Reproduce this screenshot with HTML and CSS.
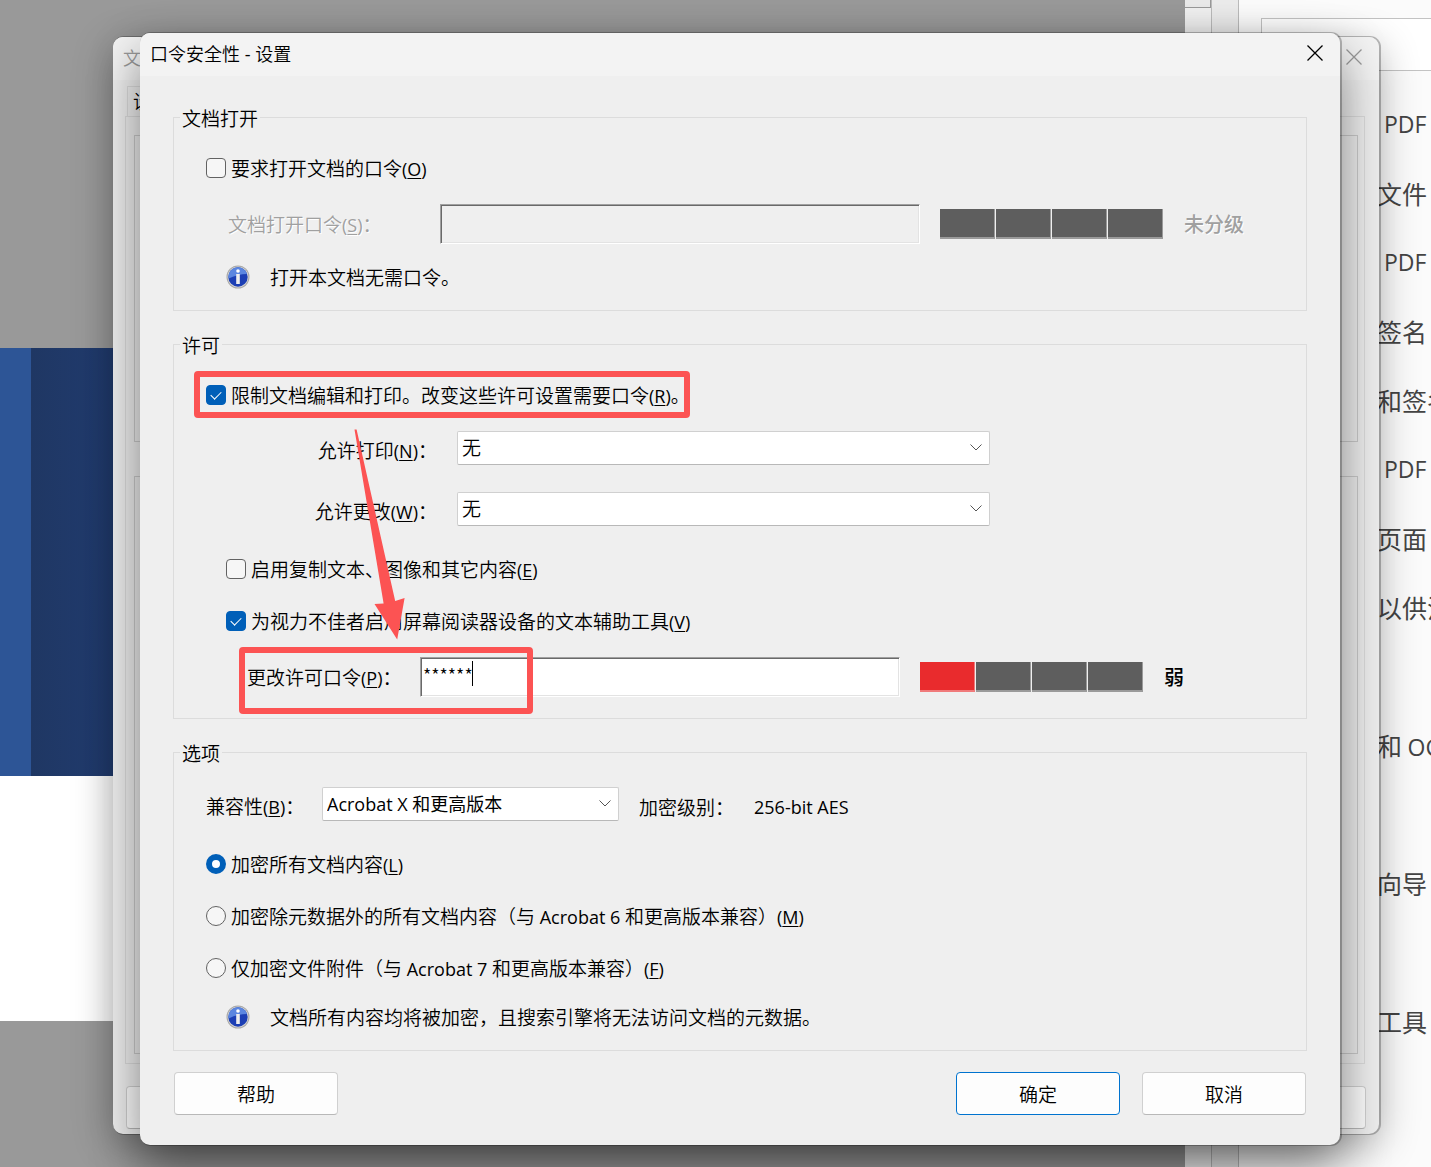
FILE: index.html
```html
<!DOCTYPE html>
<html lang="zh-CN">
  <head>
    <meta charset="utf-8">
    <title>口令安全性 - 设置</title>
    <link rel="stylesheet" href="styles.css">
  </head>
  <body>
    <div class="app">
      <div class="viewer">
        <div class="page">
          <div class="page-cover"></div>
        </div>
      </div>
      <div class="scrollbar"><div class="scroll-thumb"></div></div>
      <div class="splitter"></div>
      <div class="side-panel">
        <div class="side-box"></div>
        <ul class="side-list">
          <li class="indent">PDF</li>
          <li>文件</li>
          <li class="indent">PDF</li>
          <li>签名</li>
          <li>和签名</li>
          <li class="indent">PDF</li>
          <li>页面</li>
          <li>以供注释</li>
          <li></li>
          <li>和 <span class="en">OCR</span></li>
          <li></li>
          <li>向导</li>
          <li></li>
          <li>工具</li>
        </ul>
      </div>
    </div>

    <!-- Document properties window, behind the dialog -->
    <div class="window properties">
      <div class="title-bar">
        <span class="title">文</span>
        <button class="close" type="button" aria-label="关闭">
          <svg width="16" height="16" viewBox="0 0 16 16"><path d="M.5.5l15 15M15.5.5l-15 15"/></svg>
        </button>
      </div>
      <div class="properties-body">
        <div class="tab">设</div>
        <div class="tab-panel">
          <div class="tab-group small"></div>
          <div class="tab-group large"></div>
        </div>
        <div class="properties-footer">
          <button class="btn" type="button" aria-label="帮助"></button>
          <button class="btn" type="button" aria-label="取消"></button>
        </div>
      </div>
    </div>

    <!-- Password security dialog -->
    <form class="window dialog" role="dialog" aria-labelledby="dialog-title">
      <div class="title-bar">
        <span class="title" id="dialog-title">口令安全性<span class="en"> - </span>设置</span>
        <button class="close" type="button" aria-label="关闭">
          <svg width="16" height="16" viewBox="0 0 16 16"><path d="M.5.5l15 15M15.5.5l-15 15"/></svg>
        </button>
      </div>

      <div class="dialog-body">
        <fieldset class="group">
          <legend>文档打开</legend>
          <div class="row">
            <input type="checkbox" id="require-open">
            <label for="require-open">要求打开文档的口令<span class="en">(<u>O</u>)</span></label>
          </div>
          <div class="row field-row open-row">
            <label class="disabled" for="open-password">文档打开口令<span class="en">(<u>S</u>)</span>：</label>
            <div class="field"><input type="text" id="open-password" disabled></div>
            <div class="strength"><i></i><i></i><i></i><i></i></div>
            <span class="rating disabled">未分级</span>
          </div>
          <div class="row info-row">
            <svg class="info" width="24" height="24" viewBox="0 0 24 24">
              <circle cx="12" cy="12" r="11.5" fill="#a9a9a9"/>
              <circle cx="12" cy="12" r="10.5" fill="#d6d6d6"/>
              <circle cx="12" cy="12" r="9.7" fill="#1c3fb4"/>
              <path d="M2.6 13.5a9.5 9.5 0 0 1 18.4-4.6C15 9 8 10.5 2.6 13.500z" fill="#5b86e0"/>
              <circle cx="12" cy="6" r="1.8" fill="#fff"/>
              <path d="M10.200 9h3.600v10h-3.600z" fill="#eee"/>
            </svg>
            <span>打开本文档无需口令。</span>
          </div>
        </fieldset>

        <fieldset class="group permissions">
          <legend>许可</legend>
          <div class="row">
            <input type="checkbox" id="restrict" checked>
            <label for="restrict">限制文档编辑和打印。改变这些许可设置需要口令<span class="en">(<u>R</u>)</span>。</label>
          </div>
          <div class="row combo-row">
            <label for="allow-print">允许打印<span class="en">(<u>N</u>)</span>：</label>
            <div class="combo">
              <select id="allow-print"><option>无</option></select>
              <svg width="12" height="7" viewBox="0 0 12 7"><path d="M.5.5L6 6 11.500.5"/></svg>
            </div>
          </div>
          <div class="row combo-row">
            <label for="allow-change">允许更改<span class="en">(<u>W</u>)</span>：</label>
            <div class="combo">
              <select id="allow-change"><option>无</option></select>
              <svg width="12" height="7" viewBox="0 0 12 7"><path d="M.5.5L6 6 11.500.5"/></svg>
            </div>
          </div>
          <div class="row nested after-combo">
            <input type="checkbox" id="allow-copy">
            <label for="allow-copy">启用复制文本、图像和其它内容<span class="en">(<u>E</u>)</span></label>
          </div>
          <div class="row nested">
            <input type="checkbox" id="allow-reader" checked>
            <label for="allow-reader">为视力不佳者启用屏幕阅读器设备的文本辅助工具<span class="en">(<u>V</u>)</span></label>
          </div>
          <div class="row field-row change-row">
            <label for="change-password">更改许可口令<span class="en">(<u>P</u>)</span>：</label>
            <div class="field">
              <input type="text" id="change-password" value="******">
              <span class="caret"></span>
            </div>
            <div class="strength"><i class="weak"></i><i></i><i></i><i></i></div>
            <span class="rating">弱</span>
          </div>
        </fieldset>

        <fieldset class="group">
          <legend>选项</legend>
          <div class="row compat-row">
            <label for="compat">兼容性<span class="en">(<u>B</u>)</span>：</label>
            <div class="combo">
              <select id="compat"><option>Acrobat X 和更高版本</option></select>
              <svg width="12" height="7" viewBox="0 0 12 7"><path d="M.5.5L6 6 11.500.5"/></svg>
            </div>
            <span class="level">加密级别：</span>
            <span class="en">256-bit AES</span>
          </div>
          <div class="row after-combo">
            <input type="radio" name="scope" id="scope-all" checked>
            <label for="scope-all">加密所有文档内容<span class="en">(<u>L</u>)</span></label>
          </div>
          <div class="row">
            <input type="radio" name="scope" id="scope-meta">
            <label for="scope-meta">加密除元数据外的所有文档内容（与<span class="en"> Acrobat 6 </span>和更高版本兼容）<span class="en">(<u>M</u>)</span></label>
          </div>
          <div class="row">
            <input type="radio" name="scope" id="scope-files">
            <label for="scope-files">仅加密文件附件（与<span class="en"> Acrobat 7 </span>和更高版本兼容）<span class="en">(<u>F</u>)</span></label>
          </div>
          <div class="row info-row">
            <svg class="info" width="24" height="24" viewBox="0 0 24 24">
              <circle cx="12" cy="12" r="11.5" fill="#a9a9a9"/>
              <circle cx="12" cy="12" r="10.5" fill="#d6d6d6"/>
              <circle cx="12" cy="12" r="9.7" fill="#1c3fb4"/>
              <path d="M2.6 13.5a9.5 9.5 0 0 1 18.4-4.6C15 9 8 10.5 2.6 13.500z" fill="#5b86e0"/>
              <circle cx="12" cy="6" r="1.8" fill="#fff"/>
              <path d="M10.200 9h3.600v10h-3.600z" fill="#eee"/>
            </svg>
            <span>文档所有内容均将被加密，且搜索引擎将无法访问文档的元数据。</span>
          </div>
        </fieldset>

        <div class="footer">
          <button class="btn" type="button">帮助</button>
          <button class="btn primary" type="submit">确定</button>
          <button class="btn" type="button">取消</button>
        </div>
      </div>

      <!-- Red marks drawn over the dialog -->
      <svg class="marks" width="600" height="700" viewBox="0 0 600 700">
        <rect x="57" y="341" width="490" height="41" rx="1"/>
        <rect x="102" y="617" width="288" height="61" rx="1"/>
        <path d="M214.500 396.500L216.600 396.500 255.200 568 264.600 565 257.200 606.500 234.500 571 243.600 570.500z"/>
      </svg>
    </form>
  </body>
</html>
```
FILE: styles.css
```css
* {
  box-sizing: border-box;
}

body {
  color: #000;
  font-family: "Noto Sans CJK SC", sans-serif;
  font-size: 19px;
  font-weight: 350;
  height: 100vh;
  line-height: 28px;
  margin: 0;
  overflow: hidden;
  position: relative;
}

button, input, select {
  color: inherit;
  font: inherit;
  margin: 0;
}

.en {
  font-family: "Open Sans", "Noto Sans", sans-serif;
  font-size: 18px;
  font-weight: 400;
  white-space: pre;
}

u {
  text-decoration-thickness: 1px;
  text-underline-offset: 2px;
}

/* Application behind the windows */
.app {
  display: flex;
  height: 100%;
}

.viewer {
  background: #999;
  flex: 1;
  padding-top: 348px;
}

.page {
  background: #fff;
  height: 673px;
}

.page-cover {
  background: linear-gradient(90deg, #2d5596 31px, #1f3763 31px, #213c70 113px);
  height: 428px;
}

.scrollbar {
  background: #f0f0f0;
  border-right: 1px solid #bbb;
  width: 27px;
}

.scroll-thumb {
  background: #e9e9e9;
  border: 1px solid #999;
  border-width: 0 1px 1px 0;
  height: 8px;
}

.splitter {
  background: #ebebeb;
  border-right: 1px solid #bbb;
  width: 27px;
}

.side-panel {
  background: #fbfbfb;
  overflow: hidden;
  padding-top: 18px;
  width: 192px;
}

.side-box {
  background: #fff;
  border: 1px solid #c3c3c3;
  border-right: 0;
  height: 53px;
  margin-left: 22px;
}

.side-list {
  color: #444;
  font-size: 25px;
  font-weight: 400;
  line-height: 69px;
  list-style: none;
  margin: 19px 0 0;
  padding-left: 138px;
  white-space: nowrap;
}

.side-list li {
  height: 69px;
}

.side-list .indent {
  font-family: "Open Sans", sans-serif;
  font-size: 23px;
  padding-left: 7px;
}

.side-list .en {
  font-size: 23px;
}

/* Windows */
.window {
  background: #efefef;
  border-radius: 10px;
  display: flex;
  flex-direction: column;
  position: absolute;
}

.title-bar {
  align-items: center;
  background: #f3f3f3;
  border-radius: 10px 10px 0 0;
  display: flex;
  height: 43px;
  justify-content: space-between;
  padding: 0 17px 3px 10px;
}

.title {
  font-size: 18px;
}

.close {
  background: none;
  border: 0;
  display: flex;
  padding: 0;
}

.close path {
  fill: none;
  stroke: #000;
  stroke-width: 1.3;
}

.properties {
  bottom: 33px;
  box-shadow: 1px 0 0 1px rgba(0, 0, 0, 0.25), 0 10px 40px rgba(0, 0, 0, 0.3);
  left: 113px;
  right: 52px;
  top: 37px;
}

.properties .title {
  color: #999;
}

.properties .close path {
  stroke: #999;
}

.properties-body {
  display: flex;
  flex: 1;
  flex-direction: column;
  padding: 6px 14px 5px 12px;
}

.tab {
  border: 1px solid #dcdcdc;
  border-bottom: 0;
  height: 30px;
  margin-left: 2px;
  padding: 0 5px;
  width: 80px;
}

.tab-panel {
  border: 1px solid #dcdcdc;
  display: flex;
  flex: 1;
  flex-direction: column;
  gap: 34px;
  margin-bottom: 22px;
  padding: 18px 6px 9px 8px;
}

.tab-group {
  border: 1px solid #ccc;
}

.tab-group.small {
  flex: 306;
}

.tab-group.large {
  flex: 579;
}

.properties-footer {
  display: flex;
  justify-content: space-between;
  margin: 0 -1px 0 1px;
}

.dialog {
  box-shadow: 1px 0 0 1px rgba(0, 0, 0, 0.25), 0 22px 50px rgba(0, 0, 0, 0.48);
  left: 140px;
  right: 91px;
  top: 33px;
}

.dialog-body {
  display: flex;
  flex-direction: column;
  gap: 20px;
  padding: 28px 33px 30px;
}

/* Groups and rows */
.group {
  border: 1px solid #dcdcdc;
  margin: 0;
  min-width: 0;
  padding: 21px 0 17px 32px;
}

.permissions {
  padding-bottom: 21px;
}

.group legend {
  line-height: 27px;
  margin-left: -26px;
  padding: 0 2px;
}

.row {
  align-items: center;
  display: flex;
  gap: 5px;
  min-height: 32px;
  white-space: nowrap;
}

.row + .row {
  margin-top: 20px;
}

.nested {
  padding-left: 20px;
}

.row + .info-row {
  gap: 20px;
  margin-top: 17px;
  padding-left: 20px;
}

.field-row {
  gap: 20px;
}

.open-row label {
  margin-left: 22px;
  width: 192px;
}

.change-row label {
  margin-left: 41px;
  width: 153px;
}

.combo-row,
.compat-row {
  align-items: flex-end;
  gap: 20px;
}

.combo-row label {
  text-align: right;
  width: 231px;
}

.combo-row .combo {
  flex: 0 1 533px;
}

.row + .after-combo,
.combo-row + .combo-row {
  margin-top: 27px;
}

.compat-row label {
  width: 96px;
}

.compat-row .combo {
  flex: 0 1 297px;
}

.level {
  width: 95px;
}

.disabled {
  color: #a0a0a0;
  text-shadow: 1px 1px #fff;
}

/* Controls */
input[type="checkbox"],
input[type="radio"] {
  appearance: none;
  background: #f6f6f6;
  border: 1px solid #626262;
  border-radius: 4px;
  flex: none;
  height: 20px;
  position: relative;
  width: 20px;
}

input[type="radio"] {
  border-radius: 50%;
}

input[type="checkbox"]:checked {
  background: #005fb8;
  border-color: #005fb8;
}

input[type="checkbox"]:checked::after {
  border: solid #fff;
  border-width: 0 0 1px 1px;
  content: "";
  height: 5px;
  left: 4px;
  position: absolute;
  top: 5px;
  transform: rotate(-45deg);
  width: 9px;
}

input[type="radio"]:checked {
  background: #fff;
  border: 6px solid #005fb8;
}

.field {
  flex: 0 1 480px;
  position: relative;
}

.field input {
  background: #fff;
  border: 1px solid;
  border-color: #a0a0a0 #fff #fff #a0a0a0;
  border-radius: 0;
  box-shadow: inset 1px 1px #696969, inset -1px -1px #e3e3e3;
  display: block;
  font-size: 18px;
  height: 40px;
  outline: none;
  padding: 0 2px 6px;
  width: 100%;
}

.field input:disabled {
  background: #efefef;
}

.caret {
  background: #000;
  height: 25px;
  left: 52px;
  position: absolute;
  top: 4px;
  width: 1px;
}

.combo {
  position: relative;
}

.combo select {
  appearance: none;
  background: #fff;
  border: 1px solid #d0d0d0;
  border-bottom-color: #b8b8b8;
  border-radius: 2px;
  display: block;
  font-family: "Open Sans", "Noto Sans CJK SC", sans-serif;
  height: 34px;
  padding: 0 30px 0 4px;
  width: 100%;
}

#compat {
  font-size: 18px;
  font-weight: 400;
}

.combo svg {
  fill: none;
  pointer-events: none;
  position: absolute;
  right: 8px;
  stroke: #555;
  top: 13px;
}

.strength {
  display: flex;
  gap: 1px;
  padding-right: 1px;
}

.strength i {
  background: #5e5e5e;
  border: solid #9a9a9a;
  border-width: 0 1px 2px 0;
  height: 30px;
  width: 55px;
}

.strength .weak {
  background: #e92b2d;
  border-color: #f07a7b;
}

.rating {
  font-size: 20px;
  font-weight: 500;
}

.info {
  flex: none;
}

.btn {
  background: #fdfdfd;
  border: 1px solid #d0d0d0;
  border-bottom-color: #b8b8b8;
  border-radius: 4px;
  height: 43px;
  padding: 0;
  width: 164px;
}

.primary {
  border-color: #0073cf;
  margin-left: auto;
}

.footer {
  display: flex;
  gap: 22px;
  padding: 1px 1px 0;
}

.marks {
  left: 0;
  pointer-events: none;
  position: absolute;
  top: 0;
}

.marks rect {
  fill: none;
  stroke: #fc5353;
  stroke-linejoin: round;
  stroke-width: 6;
}

.marks path {
  fill: #fc5353;
}
```
